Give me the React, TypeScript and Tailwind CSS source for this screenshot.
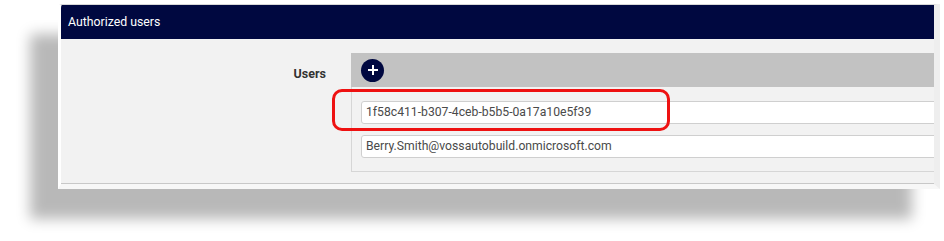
import React from 'react';

const users = ['1f58c411-b307-4ceb-b5b5-0a17a10e5f39', 'Berry.Smith@vossautobuild.onmicrosoft.com'];

const App: React.FC = () => {
  return (
    <div className="relative w-[944px] h-[241px] bg-white overflow-hidden font-['Roboto',sans-serif]">
      <div className="ml-[58px] mt-[4px] w-[882px] border-t border-[#d8d8d8] border-l-[3px] border-l-white border-r-[6px] border-r-[#eeeeee] border-b-[5px] border-b-[#f7f7f7] rounded-tl-[4px] overflow-hidden shadow-[-28px_30px_14px_rgba(0,0,0,0.28)]">
        <div className="h-[34px] bg-[#000840] flex items-center pl-[7px] text-[12.3px] text-white">
          Authorized users
        </div>
        <div className="bg-[#f2f2f2] flex pt-[14px] pb-[11px] border-b border-[#c8c8c8]">
          <div className="w-[290px] shrink-0 pr-[25px] pt-[12px] text-right text-[12.5px] font-bold text-[#333]">
            Users
          </div>
          <div className="flex-1 min-w-0">
            <div className="h-[34px] bg-[#c2c2c2] flex items-center pl-[10px]">
              <button className="w-[23px] h-[23px] rounded-full bg-[#000840] flex items-center justify-center">
                <svg width="12" height="12" viewBox="0 0 12 12">
                  <path d="M6 1v10M1 6h10" stroke="white" strokeWidth="2" />
                </svg>
              </button>
            </div>
            <div className="border-l border-b border-[#d6d6d6] pl-[9px] pt-[14px] pb-[13px] flex flex-col gap-[11px]">
              {users.map((u) => (
                <div
                  key={u}
                  className="h-[23px] -mr-[20px] bg-white border border-[#cfcfcf] rounded-[3px] flex items-center pl-[4px] text-[12.2px] text-[#4a4a4a] whitespace-nowrap"
                >
                  {u}
                </div>
              ))}
            </div>
          </div>
        </div>
      </div>
      <div className="absolute left-[332px] top-[89px] w-[338px] h-[42px] border-[3px] border-[#ee1111] rounded-[10px]" />
    </div>
  );
};

export default App;
